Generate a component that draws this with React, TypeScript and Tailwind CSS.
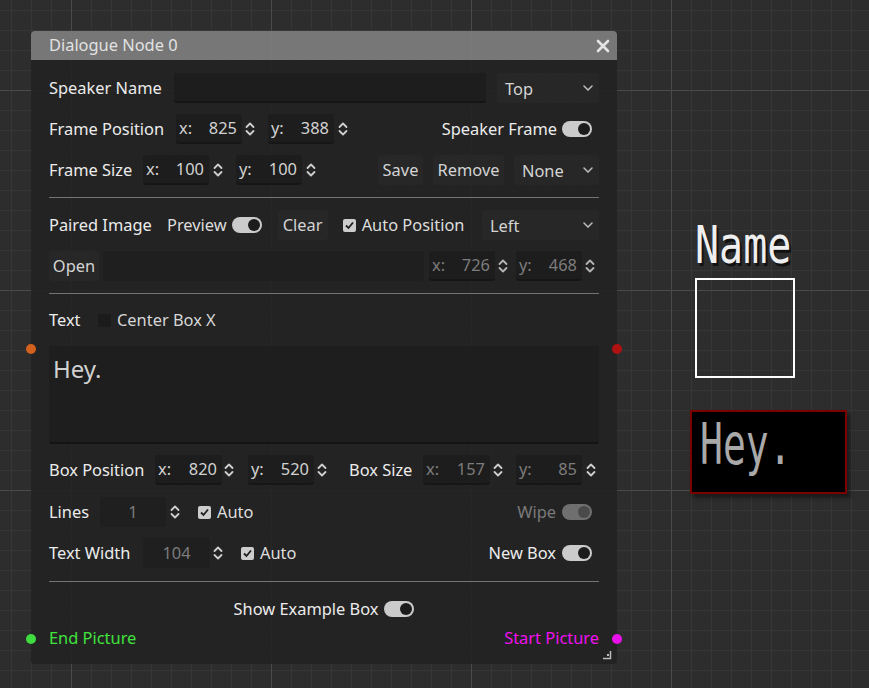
import React from "react";

const font = "font-['Noto_Sans',sans-serif]";

function UpDown({ dim }: { dim?: boolean }) {
  return (
    <svg width="10" height="16" viewBox="0 0 10 16" className="shrink-0">
      <path
        d="M1.5 6 L5 2.5 L8.5 6 M1.5 10 L5 13.5 L8.5 10"
        fill="none"
        stroke={dim ? "#b5b5b5" : "#cfcfcf"}
        strokeWidth="1.8"
        strokeLinecap="round"
        strokeLinejoin="round"
      />
    </svg>
  );
}

function Chevron() {
  return (
    <svg width="10" height="6" viewBox="0 0 10 6" className="shrink-0">
      <path d="M1 1 L5 5 L9 1" fill="none" stroke="#bdbdbd" strokeWidth="1.5" strokeLinecap="round" />
    </svg>
  );
}

function Toggle({ dim }: { dim?: boolean }) {
  return (
    <div
      className={
        dim
          ? "w-[30px] h-[16px] rounded-full bg-[#6f6f6f] flex items-center justify-end pr-[2px] shrink-0"
          : "w-[30px] h-[16px] rounded-full bg-[#cbcbcb] flex items-center justify-end pr-[2px] shrink-0"
      }
    >
      <div className={dim ? "w-[12px] h-[12px] rounded-full bg-[#4a4a4a]" : "w-[12px] h-[12px] rounded-full bg-[#1c1c1c]"} />
    </div>
  );
}

function Check({ on }: { on?: boolean }) {
  if (!on) return <div className="w-[13px] h-[13px] rounded-[2px] bg-[#1b1b1b] shrink-0" />;
  return (
    <div className="w-[13px] h-[13px] rounded-[2px] bg-[#cdcdcd] flex items-center justify-center shrink-0">
      <svg width="11" height="11" viewBox="0 0 11 11">
        <path d="M2 5.5 L4.5 8 L9 2.5" fill="none" stroke="#1e1e1e" strokeWidth="1.8" />
      </svg>
    </div>
  );
}

function Spin({
  prefix,
  value,
  dim,
  wide,
}: {
  prefix: string;
  value: string;
  dim?: boolean;
  wide?: boolean;
}) {
  return (
    <div
      className={
        (wide ? "w-[67px]" : "w-[66px]") +
        " h-[30px] rounded-[3px] bg-[#1d1d1d] border-b-2 border-[#161616] flex items-center justify-between pl-[3px] pr-[5px] shrink-0 " +
        (dim ? "text-[#7c7c7c]" : "text-[#d2d2d2]")
      }
    >
      <span>{prefix}</span>
      <span>{value}</span>
    </div>
  );
}

function CenterSpin({ value, wide }: { value: string; wide?: boolean }) {
  return (
    <div
      className={
        (wide ? "w-[67px]" : "w-[66px]") +
        " h-[30px] rounded-[3px] bg-[#1f1f1f] flex items-center justify-center text-[#7c7c7c] shrink-0"
      }
    >
      {value}
    </div>
  );
}

function Button({ children, className }: { children: React.ReactNode; className: string }) {
  return (
    <div className={"h-[30px] rounded-[3px] bg-[#272727] flex items-center justify-center text-[#d4d4d4] shrink-0 " + className}>
      {children}
    </div>
  );
}

function Dropdown({ label, className }: { label: string; className: string }) {
  return (
    <div
      className={
        "h-[30px] rounded-[3px] bg-[#272727] flex items-center justify-between pl-[8px] pr-[6px] text-[#d4d4d4] shrink-0 " +
        className
      }
    >
      <span className="mt-[2px]">{label}</span>
      <Chevron />
    </div>
  );
}

function Separator({ className }: { className: string }) {
  return <div className={"h-px bg-[#747474] " + className} />;
}

function Port({ className }: { className: string }) {
  return <div className={"absolute w-[10px] h-[10px] rounded-full -translate-x-1/2 -translate-y-1/2 " + className} />;
}

export default function App() {
  return (
    <div
      className={
        "relative w-[869px] h-[688px] overflow-hidden bg-[#2d2d2d] text-[16.4px] leading-none " +
        font +
        " [background-image:linear-gradient(to_right,#4a4a4a_1px,transparent_1px),linear-gradient(to_bottom,#4a4a4a_1px,transparent_1px),linear-gradient(to_right,#363636_1px,transparent_1px),linear-gradient(to_bottom,#363636_1px,transparent_1px)] [background-size:200px_200px,200px_200px,20px_20px,20px_20px] [background-position:71px_90px,71px_90px,11px_10px,11px_10px]"
      }
    >
      {/* Dialogue graph node */}
      <div className="absolute left-[31px] top-[31px] w-[586px] h-[633px] flex flex-col">
        <div className="h-[29px] rounded-t-[4px] bg-[#7b7b7b]/95 flex items-center justify-between pl-[18px] pr-[7px]">
          <span className="text-[#e2e2e2]">Dialogue Node 0</span>
          <svg width="14" height="14" viewBox="0 0 14 14">
            <path d="M2 2 L12 12 M12 2 L2 12" stroke="#e4e4e4" strokeWidth="2.6" strokeLinecap="round" />
          </svg>
        </div>

        <div className="relative flex-1 rounded-b-[3px] bg-[#222222]/90 px-[18px] flex flex-col text-[#ececec]">
          {/* Speaker name */}
          <div className="mt-[13px] h-[30px] flex items-center">
            <span className="w-[125px] shrink-0">Speaker Name</span>
            <div className="w-[312px] h-[30px] rounded-[3px] bg-[#1d1d1d] border-b-2 border-[#151515]" />
            <Dropdown label="Top" className="ml-[11px] w-[102px]" />
          </div>

          {/* Frame position */}
          <div className="mt-[11px] h-[30px] flex items-center">
            <span className="w-[127px] shrink-0">Frame Position</span>
            <Spin prefix="x:" value="825" />
            <div className="ml-[3px]">
              <UpDown />
            </div>
            <div className="ml-[13px]">
              <Spin prefix="y:" value="388" />
            </div>
            <div className="ml-[4px]">
              <UpDown />
            </div>
            <div className="flex-1" />
            <span>Speaker Frame</span>
            <div className="ml-[5px] mr-[7px]">
              <Toggle />
            </div>
          </div>

          {/* Frame size */}
          <div className="mt-[11px] h-[30px] flex items-center">
            <span className="w-[94px] shrink-0">Frame Size</span>
            <Spin prefix="x:" value="100" />
            <div className="ml-[4px]">
              <UpDown />
            </div>
            <div className="ml-[13px]">
              <Spin prefix="y:" value="100" />
            </div>
            <div className="ml-[4px]">
              <UpDown />
            </div>
            <div className="flex-1" />
            <Button className="w-[45px]">Save</Button>
            <Button className="ml-[10px] w-[71px]">Remove</Button>
            <Dropdown label="None" className="ml-[10px] w-[85px]" />
          </div>

          <Separator className="mt-[12px]" />

          {/* Paired image */}
          <div className="mt-[12px] h-[30px] flex items-center">
            <span className="w-[118px] shrink-0">Paired Image</span>
            <span className="text-[#dedede]">Preview</span>
            <div className="ml-[5px]">
              <Toggle />
            </div>
            <Button className="ml-[16px] w-[50px]">Clear</Button>
            <div className="ml-[15px]">
              <Check on />
            </div>
            <span className="ml-[6px] text-[#dedede]">Auto Position</span>
            <div className="flex-1" />
            <Dropdown label="Left" className="w-[117px]" />
          </div>

          {/* Open path */}
          <div className="mt-[11px] h-[30px] flex items-center">
            <Button className="w-[50px]">Open</Button>
            <div className="ml-[4px] w-[321px] h-[30px] rounded-[3px] bg-[#1f1f1f]" />
            <div className="ml-[5px]">
              <Spin prefix="x:" value="726" dim />
            </div>
            <div className="ml-[3px]">
              <UpDown dim />
            </div>
            <div className="ml-[8px]">
              <Spin prefix="y:" value="468" dim />
            </div>
            <div className="ml-[3px]">
              <UpDown dim />
            </div>
          </div>

          <Separator className="mt-[12px]" />

          {/* Text */}
          <div className="mt-[11px] h-[30px] flex items-center">
            <span className="w-[49px] shrink-0">Text</span>
            <Check />
            <span className="ml-[6px] text-[#d6d6d6]">Center Box X</span>
          </div>

          <div className="mt-[11px] h-[98px] rounded-[3px] bg-[#1e1e1e] border-b-2 border-[#141414] px-[4px] pt-[11px] text-[24px] text-[#d0d0d0]">
            Hey.
          </div>

          {/* Box position / size */}
          <div className="mt-[11px] h-[30px] flex items-center">
            <span className="w-[106px] shrink-0">Box Position</span>
            <Spin prefix="x:" value="820" wide />
            <div className="ml-[2px]">
              <UpDown />
            </div>
            <div className="ml-[14px]">
              <Spin prefix="y:" value="520" />
            </div>
            <div className="ml-[3px]">
              <UpDown />
            </div>
            <span className="ml-[22px] w-[74px] shrink-0">Box Size</span>
            <Spin prefix="x:" value="157" dim wide />
            <div className="ml-[3px]">
              <UpDown />
            </div>
            <div className="ml-[13px]">
              <Spin prefix="y:" value="85" dim />
            </div>
            <div className="ml-[4px]">
              <UpDown />
            </div>
          </div>

          {/* Lines */}
          <div className="mt-[12px] h-[30px] flex items-center">
            <span className="w-[51px] shrink-0">Lines</span>
            <CenterSpin value="1" />
            <div className="ml-[4px]">
              <UpDown />
            </div>
            <div className="ml-[18px]">
              <Check on />
            </div>
            <span className="ml-[6px] text-[#dedede]">Auto</span>
            <div className="flex-1" />
            <span className="text-[#7a7a7a]">Wipe</span>
            <div className="ml-[6px] mr-[7px]">
              <Toggle dim />
            </div>
          </div>

          {/* Text width */}
          <div className="mt-[11px] h-[30px] flex items-center">
            <span className="w-[94px] shrink-0">Text Width</span>
            <CenterSpin value="104" wide />
            <div className="ml-[3px]">
              <UpDown />
            </div>
            <div className="ml-[18px]">
              <Check on />
            </div>
            <span className="ml-[6px] text-[#dedede]">Auto</span>
            <div className="flex-1" />
            <span>New Box</span>
            <div className="ml-[6px] mr-[7px]">
              <Toggle />
            </div>
          </div>

          <Separator className="mt-[13px]" />

          <div className="mt-[12px] h-[30px] flex items-center justify-center">
            <span>Show Example Box</span>
            <div className="ml-[6px]">
              <Toggle />
            </div>
          </div>

          <div className="mt-[2px] h-[24px] flex items-center justify-between">
            <span className="text-[#40e33c]">End Picture</span>
            <span className="text-[#f010f0]">Start Picture</span>
          </div>

          {/* resize grip */}
          <svg width="10" height="10" viewBox="0 0 10 10" className="absolute right-[5px] bottom-[4px]">
            <path d="M8.5 1 V8.5 H1" fill="none" stroke="#bdbdbd" strokeWidth="1.5" />
            <rect x="5" y="4" width="2" height="2" fill="#bdbdbd" />
          </svg>
        </div>

        <Port className="left-0 top-[318px] bg-[#d3601c]" />
        <Port className="left-[586px] top-[318px] bg-[#b01212]" />
        <Port className="left-0 top-[608px] bg-[#3edc3e]" />
        <Port className="left-[586px] top-[608px] bg-[#ea10ea]" />
      </div>

      {/* Example preview on the canvas */}
      <div className="absolute left-[695px] top-[219px] origin-top-left scale-y-[1.3] font-['DejaVu_Sans_Mono',monospace] text-[40px] leading-none text-[#efefef] [text-shadow:2px_2px_0_#111]">
        Name
      </div>
      <div className="absolute left-[695px] top-[278px] w-[100px] h-[100px] border-2 border-white" />
      <div className="absolute left-[690px] top-[410px] w-[157px] h-[84px] bg-black border-2 border-[#7c0000] shadow-[3px_4px_4px_rgba(0,0,0,0.45)] overflow-hidden">
        <div className="ml-[8px] mt-[4px] origin-top-left scale-y-[1.5] font-['DejaVu_Sans_Mono',monospace] text-[38px] leading-none text-[#a9a9a9]">
          Hey.
        </div>
      </div>
    </div>
  );
}
